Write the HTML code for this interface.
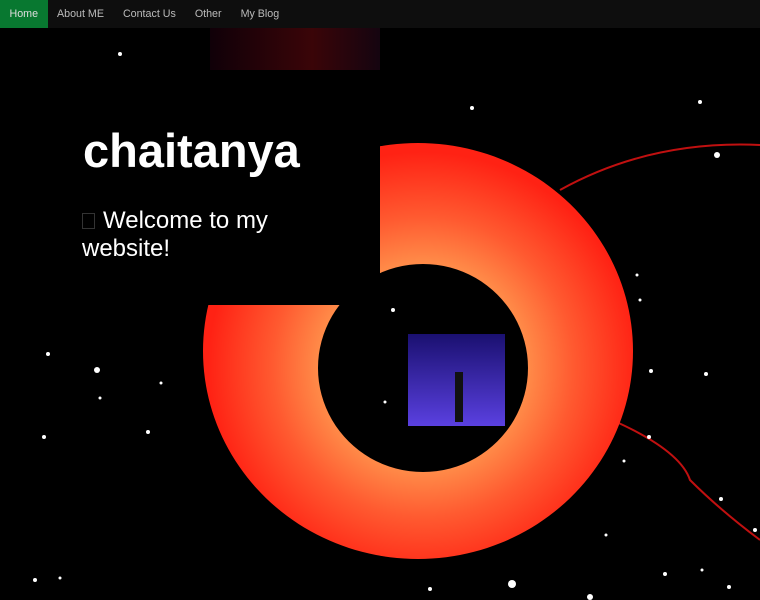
<!DOCTYPE html>
<html><head><meta charset="utf-8"><style>
*{margin:0;padding:0}
body{width:760px;height:600px;background:#000;overflow:hidden;position:relative;font-family:"Liberation Sans",sans-serif}
nav{position:absolute;top:0;left:0;width:760px;height:28px;background:#0e0e0e;z-index:5}
nav a{float:left;color:#bbb;font-size:10.7px;line-height:28px;padding:0 9.5px;text-decoration:none}
nav a.on{background:#087830;color:#ddd}
.box{position:absolute;left:0;top:70px;width:380px;height:235px;background:#000;z-index:3}
h1{position:absolute;left:83px;top:123px;color:#fff;font-size:47px;font-weight:bold;z-index:4}
p{position:absolute;left:82px;top:207px;width:230px;color:#fff;font-size:24px;line-height:28px;z-index:4}
.sq{display:inline-block;width:11px;height:14px;border:1px solid #333;margin-right:8px;vertical-align:-1px}
svg{position:absolute;left:0;top:0}
</style></head><body>
<nav><a class="on">Home</a><a>About ME</a><a>Contact Us</a><a>Other</a><a>My Blog</a></nav>
<svg width="760" height="600">
<defs>
<radialGradient id="g" cx="423" cy="367" r="215" gradientUnits="userSpaceOnUse">
<stop offset="0.49" stop-color="#ff8a48"/><stop offset="0.7" stop-color="#ff5a30"/><stop offset="1" stop-color="#ff2214"/>
</radialGradient>
<linearGradient id="p" x1="0" y1="0" x2="0" y2="1"><stop offset="0" stop-color="#1a1070"/><stop offset="1" stop-color="#5a40e0"/></linearGradient>
<linearGradient id="r" x1="0" y1="0" x2="1" y2="0"><stop offset="0" stop-color="#100008"/><stop offset="0.6" stop-color="#3a0508"/><stop offset="1" stop-color="#150510"/></linearGradient>
</defs>
<rect x="210" y="28" width="170" height="42" fill="url(#r)"/>
<path d="M560 190 Q650 140 760 145" stroke="#c01010" stroke-width="2" fill="none"/>
<path d="M612 420 Q680 450 690 480 Q720 510 760 540" stroke="#c01010" stroke-width="2" fill="none"/>
<path fill-rule="evenodd" fill="url(#g)" d="M418 143a215 208 0 1 0 0.01 0zM423 264a105 104 0 1 1 -0.01 0z"/>
<rect x="408" y="334" width="97" height="92" fill="url(#p)"/>
<rect x="455" y="372" width="8" height="50" fill="#111"/>
<g fill="#fff">
<circle cx="120" cy="54" r="2"/><circle cx="16" cy="205" r="4"/><circle cx="58" cy="143" r="3"/><circle cx="472" cy="108" r="2"/>
<circle cx="717" cy="155" r="3"/><circle cx="700" cy="102" r="2"/><circle cx="637" cy="275" r="1.5"/><circle cx="640" cy="300" r="1.5"/>
<circle cx="97" cy="370" r="3"/><circle cx="48" cy="354" r="2"/><circle cx="161" cy="383" r="1.5"/><circle cx="148" cy="432" r="2"/>
<circle cx="44" cy="437" r="2"/><circle cx="100" cy="398" r="1.5"/><circle cx="35" cy="580" r="2"/><circle cx="60" cy="578" r="1.5"/>
<circle cx="651" cy="371" r="2"/><circle cx="706" cy="374" r="2"/><circle cx="649" cy="437" r="2"/><circle cx="624" cy="461" r="1.5"/>
<circle cx="721" cy="499" r="2"/><circle cx="606" cy="535" r="1.5"/><circle cx="665" cy="574" r="2"/><circle cx="702" cy="570" r="1.5"/>
<circle cx="729" cy="587" r="2"/><circle cx="512" cy="584" r="4"/><circle cx="430" cy="589" r="2"/><circle cx="590" cy="597" r="3"/>
<circle cx="393" cy="310" r="2"/><circle cx="385" cy="402" r="1.5"/><circle cx="755" cy="530" r="2"/>
</g>
</svg>
<div class="box"></div>
<h1>chaitanya</h1>
<p><span class="sq"></span>Welcome to my website!</p>
</body></html>
